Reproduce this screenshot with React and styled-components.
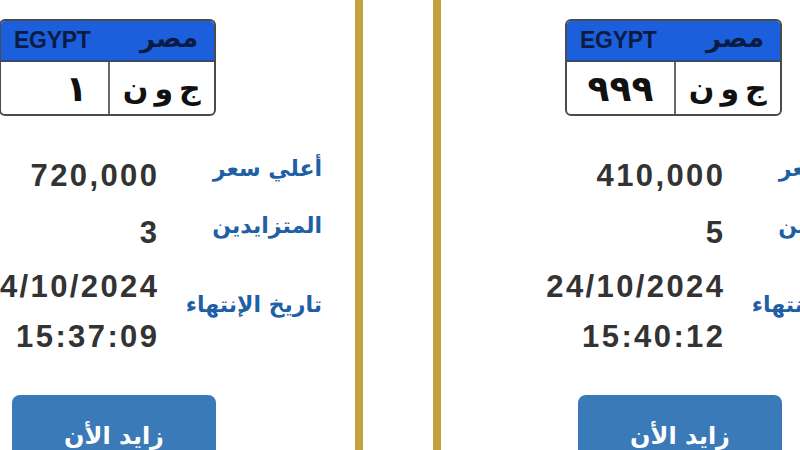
import React from 'react';
import styled, { createGlobalStyle } from 'styled-components';

const GlobalStyle = createGlobalStyle`
    html, body {
        margin: 0;
        padding: 0;
        background: #ffffff;
        overflow: hidden;
        font-family: 'Liberation Sans', Arial, sans-serif;
    }`

const Strip = styled.div`
    display: flex;
    gap: 70px;
    margin-left: -133px;
    height: 450px;`

const Card = styled.div`
    flex: 0 0 496px;
    box-sizing: border-box;
    border-left: 8px solid #c3a13c;
    border-right: 8px solid #c3a13c;
    padding-top: 19px;
    display: flex;
    flex-direction: column;
    & > * { flex-shrink: 0; }`

const Plate = styled.div`
    margin-left: 124px;
    width: 217px;
    height: 97px;
    box-sizing: border-box;
    border: 2px solid #4b4b4b;
    border-radius: 6px;
    overflow: hidden;
    display: flex;
    flex-direction: column;
    background: #fff;`

const PlateHead = styled.div`
    height: 39px;
    background: #1b5fdc;
    border-bottom: 2px solid #3b4a6a;
    display: flex;
    align-items: center;
    justify-content: space-between;
    padding: 0 16px 0 13px;
    color: #0b1c44;`

const Country = styled.span`
    font-family: 'Liberation Sans', Arial, sans-serif;
    font-weight: bold;
    font-size: 23px;
    letter-spacing: -0.3px;`

const CountryAr = styled.span`
    font-family: 'DejaVu Sans', sans-serif;
    font-weight: bold;
    font-size: 26px;
    margin-top: -6px;`

const PlateBody = styled.div`
    flex: 1;
    display: grid;
    grid-template-columns: 1fr 1fr;`

const PlateCell = styled.div`
    display: flex;
    align-items: center;
    justify-content: ${p => (p.$align === 'right' ? 'flex-end' : 'center')};
    padding-right: ${p => (p.$align === 'right' ? '20px' : '0')};
    border-left: ${p => (p.$divider ? '2px solid #6a6a6a' : 'none')};
    font-family: 'DejaVu Sans', sans-serif;
    font-weight: bold;
    font-size: ${p => p.$size || 30}px;
    color: #111;`

const Table = styled.div`
    margin-top: 35px;
    display: grid;
    grid-template-columns: 282px 165px;
    row-gap: 4px;`

const Value = styled.div`
    text-align: right;
    font-family: 'Liberation Sans', Arial, sans-serif;
    font-weight: bold;
    font-size: 31px;
    letter-spacing: 2.4px;
    margin-right: -2.4px;
    margin-top: ${p => p.$push || 0}px;
    line-height: 50px;
    color: #333333;
    white-space: nowrap;`

const Label = styled.div`
    align-self: center;
    text-align: right;
    direction: rtl;
    font-family: 'DejaVu Sans', sans-serif;
    font-weight: bold;
    font-size: 22px;
    color: #1f5fa5;
    padding-bottom: 16px;
    margin-top: ${p => p.$push || 0}px;
    white-space: nowrap;`

const BidButton = styled.button`
    margin: 33px 0 0 137px;
    width: 204px;
    height: 64px;
    border: 0;
    border-radius: 8px;
    background: #3a7ab9;
    color: #ffffff;
    font-family: 'DejaVu Sans', sans-serif;
    font-weight: bold;
    font-size: 24px;
    direction: rtl;
    padding: 0 0 9px 0;
    display: flex;
    align-items: flex-end;
    justify-content: center;
    cursor: pointer;`

const auctions = [
    { number: '١', letters: 'ج\u2009و\u2009ن', price: '720,000', bidders: '3', date: '24/10/2024', time: '15:37:09' },
    { number: '٩٩٩', letters: 'ج\u2009و\u2009ن', price: '410,000', bidders: '5', date: '24/10/2024', time: '15:40:12' },
];

function AuctionCard({ item }) {
    return (
        <Card>
            <Plate>
                <PlateHead>
                    <Country>EGYPT</Country>
                    <CountryAr>مصر</CountryAr>
                </PlateHead>
                <PlateBody>
                    <PlateCell $align='right' $size={36}>{item.number}</PlateCell>
                    <PlateCell $divider>{item.letters}</PlateCell>
                </PlateBody>
            </Plate>

            <Table>
                <Value>{item.price}</Value>
                <Label>أعلي سعر</Label>

                <Value $push={3}>{item.bidders}</Value>
                <Label $push={3}>المتزايدين</Label>

                <Value>{item.date}<br />{item.time}</Value>
                <Label>تاريخ الإنتهاء</Label>
            </Table>

            <BidButton>زايد الأن</BidButton>
        </Card>
    );
}

export default function App() {
    return (
        <>
            <GlobalStyle />
            <Strip>
                {auctions.map((a, i) => <AuctionCard key={i} item={a} />)}
            </Strip>
        </>
    );
}
